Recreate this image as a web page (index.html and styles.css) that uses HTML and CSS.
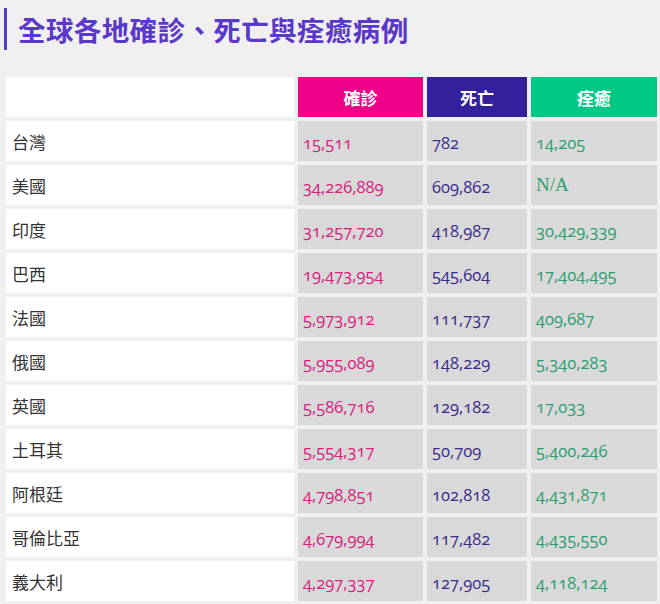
FILE: index.html
```html
<!DOCTYPE html>
<html lang="zh-Hant">
<head>
<meta charset="utf-8">
<title>全球各地確診、死亡與痊癒病例</title>
<link rel="stylesheet" href="styles.css">
</head>
<body>
<h1 class="title">全球各地確診、死亡與痊癒病例</h1>
<div class="table">
  <div class="cell blank"></div>
  <div class="cell head h-conf">確診</div>
  <div class="cell head h-death">死亡</div>
  <div class="cell head h-rec">痊癒</div>

  <div class="cell name">台灣</div><div class="cell num conf">15,511</div><div class="cell num death">782</div><div class="cell num rec">14,205</div>
  <div class="cell name">美國</div><div class="cell num conf">34,226,889</div><div class="cell num death">609,862</div><div class="cell num rec na">N/A</div>
  <div class="cell name">印度</div><div class="cell num conf">31,257,720</div><div class="cell num death">418,987</div><div class="cell num rec">30,429,339</div>
  <div class="cell name">巴西</div><div class="cell num conf">19,473,954</div><div class="cell num death">545,604</div><div class="cell num rec">17,404,495</div>
  <div class="cell name">法國</div><div class="cell num conf">5,973,912</div><div class="cell num death">111,737</div><div class="cell num rec">409,687</div>
  <div class="cell name">俄國</div><div class="cell num conf">5,955,089</div><div class="cell num death">148,229</div><div class="cell num rec">5,340,283</div>
  <div class="cell name">英國</div><div class="cell num conf">5,586,716</div><div class="cell num death">129,182</div><div class="cell num rec">17,033</div>
  <div class="cell name">土耳其</div><div class="cell num conf">5,554,317</div><div class="cell num death">50,709</div><div class="cell num rec">5,400,246</div>
  <div class="cell name">阿根廷</div><div class="cell num conf">4,798,851</div><div class="cell num death">102,818</div><div class="cell num rec">4,431,871</div>
  <div class="cell name">哥倫比亞</div><div class="cell num conf">4,679,994</div><div class="cell num death">117,482</div><div class="cell num rec">4,435,550</div>
  <div class="cell name">義大利</div><div class="cell num conf">4,297,337</div><div class="cell num death">127,905</div><div class="cell num rec">4,118,124</div>
</div>
</body>
</html>
```

FILE: styles.css
```css
html, body {
  margin: 0;
  padding: 0;
  background: #f0f0f0;
}
body {
  width: 660px;
  height: 604px;
  overflow: hidden;
  font-family: "Noto Sans CJK TC", "Noto Sans", sans-serif;
}
.title {
  margin: 8px 0 0 4px;
  padding: 0 0 0 11px;
  border-left: 3px solid #5a3bc6;
  height: 42px;
  line-height: 42px;
  font-size: 27.5px;
  font-weight: 700;
  color: #5a38c8;
  letter-spacing: 0.4px;
}
.table {
  margin: 27px 0 0 6px;
  display: grid;
  grid-template-columns: 288px 125px 100px 126px;
  grid-auto-rows: 40px;
  gap: 4px;
}
.cell {
  display: flex;
  align-items: center;
  box-sizing: border-box;
}
.blank, .name {
  background: #ffffff;
}
.name {
  padding-left: 6px;
  font-size: 17px;
  color: #333333;
}
.head {
  justify-content: center;
  color: #ffffff;
  font-weight: 700;
  font-size: 17px;
}
.h-conf { background: #ee0088; }
.h-death { background: #33209b; }
.h-rec { background: #00c987; }
.num {
  background: #d9d9d9;
  padding-left: 5px;
  padding-top: 3px;
  font-family: "Open Sans", "Noto Sans", sans-serif;
  font-size: 16.5px;
  font-feature-settings: "onum" 1;
  font-variant-numeric: oldstyle-nums;
}
.conf { color: #d8207e; }
.death { color: #3a2a8e; }
.rec { color: #2b9e6d; }
.na {
  font-family: "Liberation Serif", serif;
  font-size: 19px;
  padding-top: 0;
}
```
